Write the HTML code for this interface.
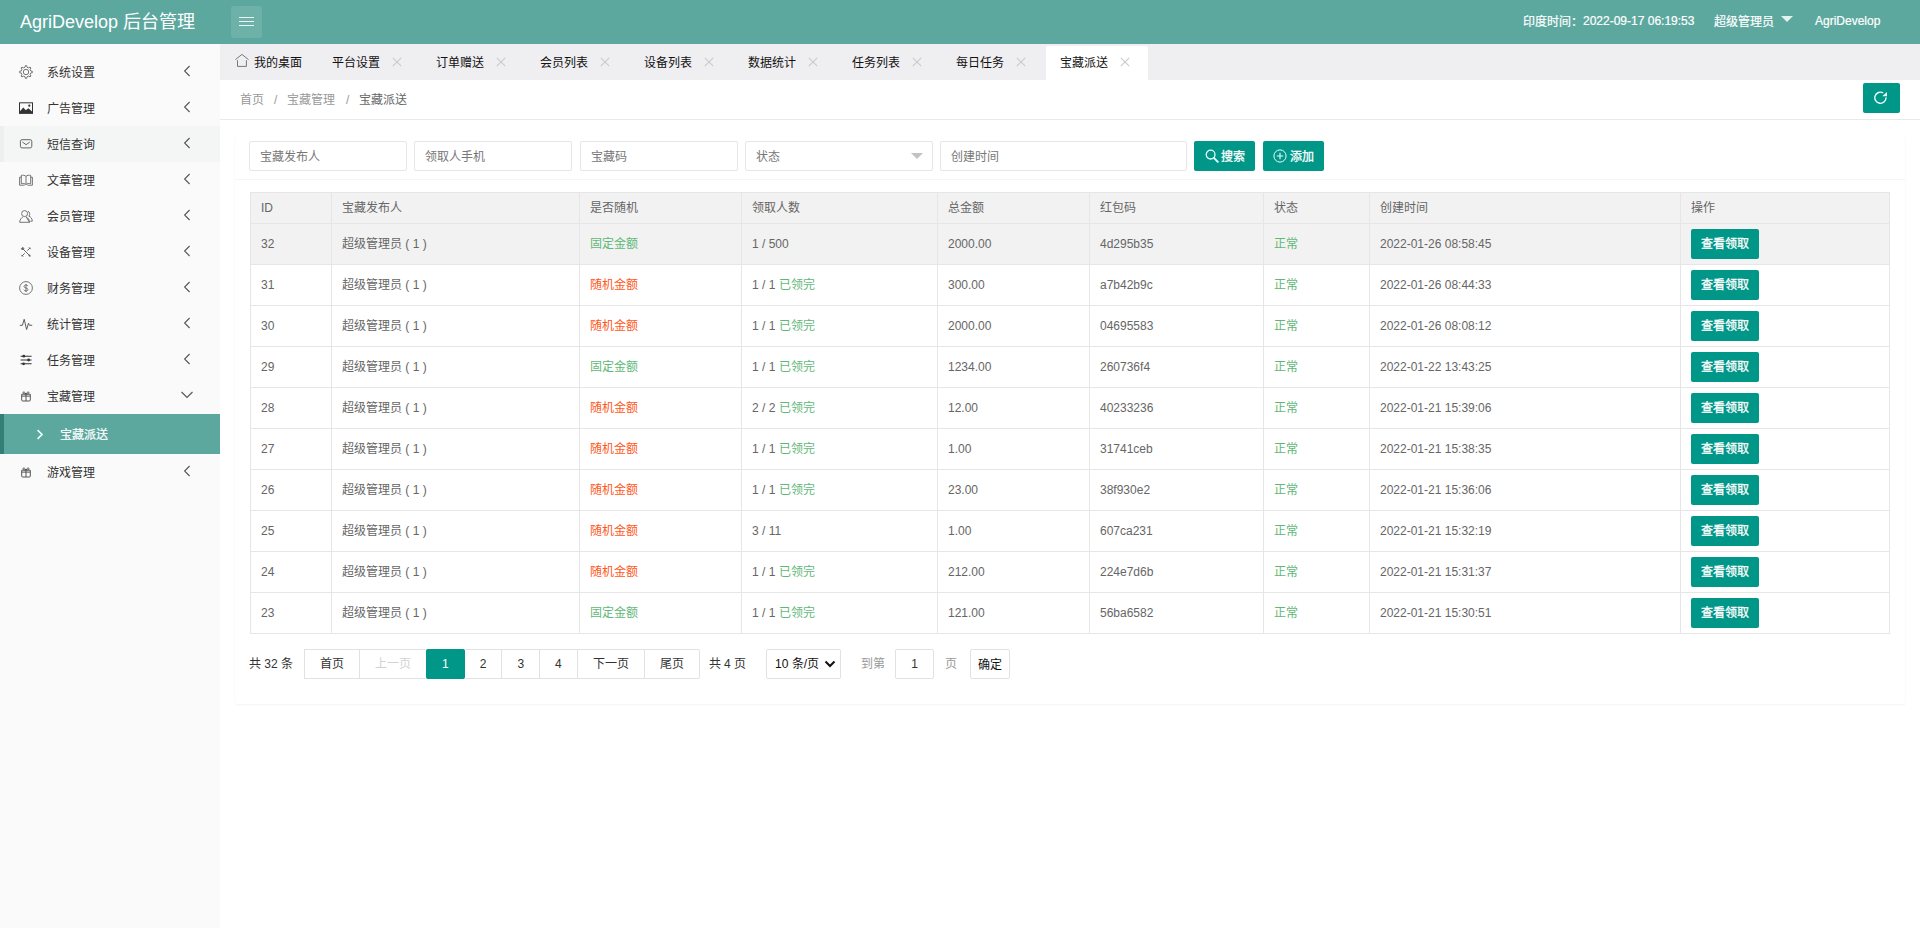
<!DOCTYPE html>
<html lang="zh-CN">
<head>
<meta charset="utf-8">
<title>AgriDevelop 后台管理</title>
<style>
*{box-sizing:border-box;margin:0;padding:0}
html,body{width:1920px;height:928px;overflow:hidden;background:#fff}
body{font-family:"Liberation Sans",sans-serif;font-size:12px;color:#666;line-height:1}
ul{list-style:none}
svg{display:block}
/* header */
.hd{position:absolute;left:0;top:0;width:1920px;height:44px;background:#5ca89f;color:#fff}
.logo{position:absolute;left:20px;top:0;height:44px;line-height:45px;font-size:18px;white-space:nowrap}
.burger{position:absolute;left:231px;top:6px;width:31px;height:32px;border-radius:3px;background:rgba(255,255,255,.11)}
.burger i{position:absolute;left:8px;width:15px;height:1.4px;background:#eaf8f6}
.hr{position:absolute;top:0;height:44px;line-height:42px;font-size:12px;white-space:nowrap;-webkit-text-stroke:.2px #fff}
.tri{position:absolute;left:1781px;top:16px;width:0;height:0;border:6px solid transparent;border-top-color:#e3f1ef;border-bottom-width:0}
/* side */
.side{position:absolute;left:0;top:44px;width:220px;height:884px;background:#fafafa;padding-top:10px}
.side li{position:relative;height:36px;line-height:39px;color:#333;white-space:nowrap}
.side li span{position:absolute;left:47px;top:0}
.side li svg.ic{position:absolute;left:19px;top:11px;width:14px;height:14px}
.side li svg.ar{position:absolute;left:183px;top:11px;width:8px;height:12px}
.side li.hov{background:#f4f6f6;border-left:4px solid #ebefef}
.side li.hov span{left:43px}.side li.hov svg.ic{left:15px}.side li.hov svg.ar{left:179px}
.side li.sub{height:40px;line-height:43px;background:#5ca89f;border-left:4px solid #337f78;color:#fff}
.side li.sub span{left:56px;-webkit-text-stroke:.2px #fff}
.side li.sub svg.ar{left:32px;top:15px;width:8px;height:11px}
/* tabs */
.tabs{position:absolute;left:220px;top:44px;width:1700px;height:36px;background:#efeef1;white-space:nowrap;font-size:0}
.tabs li{display:inline-block;vertical-align:top;position:relative;width:104px;height:36px;line-height:38px;padding:0 0 0 15px;font-size:12px;color:#111;overflow:hidden;white-space:nowrap}
.tabs li.first{width:97px}
.tabs li svg.home{display:inline-block;vertical-align:top;margin:9px 5px 0 0;width:14px;height:14px}
.tabs li i{position:absolute;left:71px;top:0;width:18px;height:36px}
.tabs li i svg{position:absolute;left:4px;top:13px;width:10px;height:10px}
.tabs li.on{background:#fff;width:102px;height:34px;margin:2px 1px 0;padding:0 0 0 14px;line-height:34px;border-radius:2px 2px 0 0}
.tabs li.on i{left:70px;height:34px}.tabs li.on i svg{top:11px}
/* crumb */
.crumb{position:absolute;left:220px;top:80px;width:1700px;height:40px;border-bottom:1px solid #e9e9e9;background:#fff;line-height:40px;padding-left:20px;color:#999;white-space:nowrap}
.crumb span{position:absolute;top:0}
.crumb em{font-style:normal;color:#666}
.refresh{position:absolute;left:1863px;top:83px;width:37px;height:30px;background:#009688;border-radius:2px}
.refresh svg{position:absolute;left:11px;top:8px;width:15px;height:15px}
/* card */
.card{position:absolute;left:235px;top:135px;width:1670px;height:569px;background:#fff;box-shadow:0 1px 2px rgba(0,0,0,.05)}
.filter{position:absolute;left:0;top:0;width:1670px;height:45px;border-bottom:1px solid #f6f6f6}
.inp{position:absolute;top:6px;height:30px;border:1px solid #e6e6e6;border-radius:2px;background:#fff;line-height:30px;padding-left:10px;color:#777;white-space:nowrap}
.btn{position:absolute;top:6px;height:30px;line-height:33px;background:#009688;color:#fff;-webkit-text-stroke:.3px #fff;border-radius:2px;white-space:nowrap}
.btn svg{position:absolute}
/* table */
table{position:absolute;left:15px;top:57px;width:1639px;border-collapse:collapse;table-layout:fixed}
th,td{border:1px solid #e6e6e6;padding:0 10px;text-align:left;font-weight:normal;font-size:12px;color:#666;white-space:nowrap;overflow:hidden}
th{height:31px;background:#f2f2f2;line-height:30px}
td{height:41px;line-height:40px}
tr.hv td{background:#f2f2f2}
.g{color:#5fb878}.r{color:#ff5722}
.op{display:inline-block;vertical-align:middle;width:68px;height:30px;line-height:31px;margin-top:-1px;background:#009688;color:#fff;border-radius:2px;text-align:center;-webkit-text-stroke:.3px #fff}
/* pager */
.pg{position:absolute;left:13px;top:514px;height:30px;white-space:nowrap;font-size:0}
.pg>*{display:inline-block;vertical-align:top;height:30px;line-height:28px;font-size:12px;color:#333}
.pg a{border:1px solid #e2e2e2;padding:0;margin-right:-1px;background:#fff;text-align:center;overflow:hidden}
.pg a.w2{width:56px}.pg a.w3{width:68px}.pg a.w1{width:38.69px}
.pg a.dis{color:#d2d2d2}
.pg a.cur{background:#009688;border-color:#009688;color:#fff;border-radius:2px;position:relative}
.pg .cnt{width:56px;padding-left:1px;border:0;overflow:hidden;line-height:30px}

.inp .caret{position:absolute;left:165px;top:11px;width:0;height:0;border:6px solid transparent;border-top-color:#c2c2c2;border-bottom-width:0}
.pg .tot{margin-left:9px;width:39.3px;padding-left:1px;overflow:hidden;line-height:30px}
.pg .sel{position:relative;margin-left:19px;width:75px;border:1px solid #e2e2e2;border-radius:2px;padding-left:8px;color:#111}
.pg .sel svg{position:absolute;left:57px;top:10px;width:12px;height:8px}
.pg .go{margin-left:19px;width:26px;padding-left:1px;color:#999;overflow:hidden;line-height:30px}
.pg .num{margin-left:9px;width:39px;border:1px solid #e2e2e2;border-radius:2px;text-align:center;color:#333}
.pg .go2{margin-left:10px;width:14px;padding-left:1px;color:#999;overflow:hidden;line-height:30px}
.pg .ok{margin-left:12px;width:40px;line-height:30px;border:1px solid #e2e2e2;border-radius:2px;text-align:center;color:#111}
</style>
</head>
<body>
<div class="hd">
  <div class="logo">AgriDevelop 后台管理</div>
  <div class="burger"><i style="top:11px"></i><i style="top:15px"></i><i style="top:19px"></i></div>
  <div class="hr" style="left:1523px"><span style="position:relative;top:1px">印度时间：</span>2022-09-17 06:19:53</div>
  <div class="hr" style="left:1714px;line-height:44px">超级管理员</div>
  <div class="tri"></div>
  <div class="hr" style="left:1815px">AgriDevelop</div>
</div>

<ul class="side">
  <li><svg class="ic" viewBox="0 0 14 14"><path d="M11.81 6.04 L13.37 6.35 L13.37 7.65 L11.81 7.96 L11.07 9.72 L11.96 11.04 L11.04 11.96 L9.72 11.07 L7.96 11.81 L7.65 13.37 L6.35 13.37 L6.04 11.81 L4.28 11.07 L2.96 11.96 L2.04 11.04 L2.93 9.72 L2.19 7.96 L0.63 7.65 L0.63 6.35 L2.19 6.04 L2.93 4.28 L2.04 2.96 L2.96 2.04 L4.28 2.93 L6.04 2.19 L6.35 0.63 L7.65 0.63 L7.96 2.19 L9.72 2.93 L11.04 2.04 L11.96 2.96 L11.07 4.28Z" fill="none" stroke="#666" stroke-width="0.9" stroke-linejoin="round"/><circle cx="7" cy="7" r="2.7" fill="none" stroke="#666" stroke-width="0.9"/></svg><span>系统设置</span><svg class="ar" viewBox="0 0 8 12"><path d="M6.6 1 1.6 6l5 5" fill="none" stroke="#555" stroke-width="1.1"/></svg></li>
  <li><svg class="ic" viewBox="0 0 14 14"><rect x="0.5" y="1.8" width="13" height="10.6" fill="none" stroke="#333" stroke-width="1"/><path d="M1 12V10.2L4.3 6.6 6.8 9.3 9.4 7.2 13 10.6V12Z" fill="#333"/><circle cx="10.3" cy="4.7" r="1.1" fill="#333"/></svg><span>广告管理</span><svg class="ar" viewBox="0 0 8 12"><path d="M6.6 1 1.6 6l5 5" fill="none" stroke="#555" stroke-width="1.1"/></svg></li>
  <li class="hov"><svg class="ic" viewBox="0 0 14 14"><rect x="1.4" y="2.7" width="11.4" height="8.2" rx="1.6" fill="none" stroke="#666" stroke-width="1"/><path d="M3.4 5 7.1 7.7l3.7-2.7" fill="none" stroke="#666" stroke-width="1"/></svg><span>短信查询</span><svg class="ar" viewBox="0 0 8 12"><path d="M6.6 1 1.6 6l5 5" fill="none" stroke="#555" stroke-width="1.1"/></svg></li>
  <li><svg class="ic" viewBox="0 0 14 14"><path d="M7 3.4C5.8 2.2 4 2 2.3 2.4V10.6C4 10.2 5.8 10.4 7 11.6 8.2 10.4 10 10.2 11.7 10.6V2.4C10 2 8.2 2.2 7 3.4ZM7 3.4V11.6M2.3 4.2H.6V12.2H5.6M11.7 4.2H13.4V12.2H8.4" fill="none" stroke="#666" stroke-width="0.9"/></svg><span>文章管理</span><svg class="ar" viewBox="0 0 8 12"><path d="M6.6 1 1.6 6l5 5" fill="none" stroke="#555" stroke-width="1.1"/></svg></li>
  <li><svg class="ic" viewBox="0 0 14 14"><circle cx="5.6" cy="4.6" r="3" fill="none" stroke="#666" stroke-width="0.9"/><path d="M.7 13.3C.7 10.4 2.6 8.6 3.9 8.1M7.3 8.1C8.6 8.6 10.5 10.4 10.5 13.3ZM.7 13.3H10.5" fill="none" stroke="#666" stroke-width="0.9"/><path d="M9 2.3C10.6 2.6 11.4 5.6 9.9 7.2 11.6 7.8 13.3 9.6 13.3 12.2H11.3" fill="none" stroke="#666" stroke-width="0.9"/></svg><span>会员管理</span><svg class="ar" viewBox="0 0 8 12"><path d="M6.6 1 1.6 6l5 5" fill="none" stroke="#555" stroke-width="1.1"/></svg></li>
  <li><svg class="ic" viewBox="0 0 14 14"><path d="M3.4 3.4 11 11M11.2 2.8 8.3 5.7M5.7 8.3 2.8 11.2" fill="none" stroke="#666" stroke-width="1"/><path d="M2.2 3.8 3.8 2.2 5 3.4 3.4 5ZM9.8 9.2 11.6 11 11 11.6 9.2 9.8Z" fill="#666" stroke="#666" stroke-width=".7"/><path d="M9.9 2.3 11.7 4.1M2.3 9.9 4.1 11.7" fill="none" stroke="#666" stroke-width="1"/></svg><span>设备管理</span><svg class="ar" viewBox="0 0 8 12"><path d="M6.6 1 1.6 6l5 5" fill="none" stroke="#555" stroke-width="1.1"/></svg></li>
  <li><svg class="ic" viewBox="0 0 14 14"><circle cx="7" cy="7" r="6.4" fill="none" stroke="#666" stroke-width="0.9"/><path d="M9 5.2C8.6 4.3 7.8 4 7 4 5.9 4 5 4.6 5 5.5 5 7.4 9 6.6 9 8.5 9 9.4 8.1 10 7 10 6 10 5.2 9.6 4.9 8.7M7 3V11" fill="none" stroke="#666" stroke-width="0.9"/></svg><span>财务管理</span><svg class="ar" viewBox="0 0 8 12"><path d="M6.6 1 1.6 6l5 5" fill="none" stroke="#555" stroke-width="1.1"/></svg></li>
  <li><svg class="ic" viewBox="0 0 14 14"><path d="M.8 8.3H3.4L5.2 2.3 7.6 12.6 9.5 6.2 10.5 8.3H13.2" fill="none" stroke="#555" stroke-width=".95" stroke-linejoin="round"/></svg><span>统计管理</span><svg class="ar" viewBox="0 0 8 12"><path d="M6.6 1 1.6 6l5 5" fill="none" stroke="#555" stroke-width="1.1"/></svg></li>
  <li><svg class="ic" viewBox="0 0 14 14"><path d="M1.6 3.2H12.6M1.6 7H12.6M1.6 10.8H12.6" fill="none" stroke="#333" stroke-width="1.1"/><circle cx="4.8" cy="3.2" r="1.4" fill="#333"/><circle cx="9.6" cy="7" r="1.4" fill="#333"/><circle cx="4.6" cy="10.8" r="1.4" fill="#333"/></svg><span>任务管理</span><svg class="ar" viewBox="0 0 8 12"><path d="M6.6 1 1.6 6l5 5" fill="none" stroke="#555" stroke-width="1.1"/></svg></li>
  <li><svg class="ic" viewBox="0 0 14 14"><path d="M2.7 5.2H11.3V11.1Q11.3 12 10.4 12H3.6Q2.7 12 2.7 11.1ZM2.7 7.1H11.3M7 5.2V12M7 5C5.6 2.2 3.2 2.6 4.4 4.4 5 5 6.2 5 7 5 7.8 5 9 5 9.6 4.4 10.8 2.6 8.4 2.2 7 5Z" fill="none" stroke="#555" stroke-width="1"/></svg><span>宝藏管理</span><svg class="ar" style="left:180px;top:13px;width:14px;height:8px" viewBox="0 0 14 8"><path d="M1.5 1 7 6.5 12.5 1" fill="none" stroke="#555" stroke-width="1.1"/></svg></li>
  <li class="sub"><svg class="ar" viewBox="0 0 8 11"><path d="M1.6 1.2 6 5.5 1.6 9.8" fill="none" stroke="#e8fffb" stroke-width="1.7"/></svg><span>宝藏派送</span></li>
  <li><svg class="ic" viewBox="0 0 14 14"><path d="M2.7 5.2H11.3V11.1Q11.3 12 10.4 12H3.6Q2.7 12 2.7 11.1ZM2.7 7.1H11.3M7 5.2V12M7 5C5.6 2.2 3.2 2.6 4.4 4.4 5 5 6.2 5 7 5 7.8 5 9 5 9.6 4.4 10.8 2.6 8.4 2.2 7 5Z" fill="none" stroke="#555" stroke-width="1"/></svg><span>游戏管理</span><svg class="ar" viewBox="0 0 8 12"><path d="M6.6 1 1.6 6l5 5" fill="none" stroke="#555" stroke-width="1.1"/></svg></li>
</ul>

<ul class="tabs">
  <li class="first"><svg class="home" viewBox="0 0 14 14"><path d="M.4 6.6 6.95 1.4 13.5 6.6M2.5 7.2V13.4H11.4V7.2" fill="none" stroke="#777" stroke-width="1"/></svg>我的桌面</li>
  <li>平台设置<i><svg viewBox="0 0 10 10"><path d="M.8.8 9.2 9.2M9.2.8.8 9.2" fill="none" stroke="#cacaca" stroke-width="1.1"/></svg></i></li>
  <li>订单赠送<i><svg viewBox="0 0 10 10"><path d="M.8.8 9.2 9.2M9.2.8.8 9.2" fill="none" stroke="#cacaca" stroke-width="1.1"/></svg></i></li>
  <li>会员列表<i><svg viewBox="0 0 10 10"><path d="M.8.8 9.2 9.2M9.2.8.8 9.2" fill="none" stroke="#cacaca" stroke-width="1.1"/></svg></i></li>
  <li>设备列表<i><svg viewBox="0 0 10 10"><path d="M.8.8 9.2 9.2M9.2.8.8 9.2" fill="none" stroke="#cacaca" stroke-width="1.1"/></svg></i></li>
  <li>数据统计<i><svg viewBox="0 0 10 10"><path d="M.8.8 9.2 9.2M9.2.8.8 9.2" fill="none" stroke="#cacaca" stroke-width="1.1"/></svg></i></li>
  <li>任务列表<i><svg viewBox="0 0 10 10"><path d="M.8.8 9.2 9.2M9.2.8.8 9.2" fill="none" stroke="#cacaca" stroke-width="1.1"/></svg></i></li>
  <li>每日任务<i><svg viewBox="0 0 10 10"><path d="M.8.8 9.2 9.2M9.2.8.8 9.2" fill="none" stroke="#cacaca" stroke-width="1.1"/></svg></i></li>
  <li class="on">宝藏派送<i><svg viewBox="0 0 10 10"><path d="M.8.8 9.2 9.2M9.2.8.8 9.2" fill="none" stroke="#cacaca" stroke-width="1.1"/></svg></i></li>
</ul>
<div class="crumb"><span style="left:20px">首页</span><span style="left:54px">/</span><span style="left:67px">宝藏管理</span><span style="left:126px">/</span><span style="left:139px"><em>宝藏派送</em></span></div>
<div class="refresh"><svg viewBox="0 0 15 15"><path d="M12 6.4A5.6 5.6 0 1 1 9.2 1.9" fill="none" stroke="#e6fffb" stroke-width="1.4"/><path d="M13 .9V5.3H8.2Z" fill="#e6fffb"/></svg></div>
<div class="card">
  <div class="filter">
    <div class="inp" style="left:14px;width:158px">宝藏发布人</div>
    <div class="inp" style="left:179px;width:158px">领取人手机</div>
    <div class="inp" style="left:345px;width:158px">宝藏码</div>
    <div class="inp" style="left:510px;width:188px">状态<s class="caret"></s></div>
    <div class="inp" style="left:705px;width:247px">创建时间</div>
    <div class="btn" style="left:959px;width:61px"><svg style="left:11px;top:8px;width:14px;height:14px" viewBox="0 0 14 14"><circle cx="5.6" cy="5.6" r="4.4" fill="none" stroke="#e6fffb" stroke-width="1.3"/><path d="M8.9 8.9 12.8 12.8" stroke="#e6fffb" stroke-width="1.9" stroke-linecap="round"/></svg><span style="position:absolute;left:27px">搜索</span></div>
    <div class="btn" style="left:1028px;width:61px"><svg style="left:10px;top:8px;width:14px;height:14px" viewBox="0 0 14 14"><circle cx="7" cy="7" r="6.1" fill="none" stroke="#e6fffb" stroke-width="1"/><path d="M7 3.8V10.2M3.8 7H10.2" stroke="#e6fffb" stroke-width="1.1"/></svg><span style="position:absolute;left:27px">添加</span></div>
  </div>
  <table>
    <colgroup><col style="width:81px"><col style="width:248px"><col style="width:162px"><col style="width:196px"><col style="width:152px"><col style="width:174px"><col style="width:106px"><col style="width:311px"><col style="width:209px"></colgroup>
    <thead><tr><th>ID</th><th>宝藏发布人</th><th>是否随机</th><th>领取人数</th><th>总金额</th><th>红包码</th><th>状态</th><th>创建时间</th><th>操作</th></tr></thead>
    <tbody>
      <tr class="hv"><td>32</td><td>超级管理员 ( 1 )</td><td class="g">固定金额</td><td>1 / 500</td><td>2000.00</td><td>4d295b35</td><td class="g">正常</td><td>2022-01-26 08:58:45</td><td><a class="op">查看领取</a></td></tr>
      <tr><td>31</td><td>超级管理员 ( 1 )</td><td class="r">随机金额</td><td>1 / 1 <span class="g">已领完</span></td><td>300.00</td><td>a7b42b9c</td><td class="g">正常</td><td>2022-01-26 08:44:33</td><td><a class="op">查看领取</a></td></tr>
      <tr><td>30</td><td>超级管理员 ( 1 )</td><td class="r">随机金额</td><td>1 / 1 <span class="g">已领完</span></td><td>2000.00</td><td>04695583</td><td class="g">正常</td><td>2022-01-26 08:08:12</td><td><a class="op">查看领取</a></td></tr>
      <tr><td>29</td><td>超级管理员 ( 1 )</td><td class="g">固定金额</td><td>1 / 1 <span class="g">已领完</span></td><td>1234.00</td><td>260736f4</td><td class="g">正常</td><td>2022-01-22 13:43:25</td><td><a class="op">查看领取</a></td></tr>
      <tr><td>28</td><td>超级管理员 ( 1 )</td><td class="r">随机金额</td><td>2 / 2 <span class="g">已领完</span></td><td>12.00</td><td>40233236</td><td class="g">正常</td><td>2022-01-21 15:39:06</td><td><a class="op">查看领取</a></td></tr>
      <tr><td>27</td><td>超级管理员 ( 1 )</td><td class="r">随机金额</td><td>1 / 1 <span class="g">已领完</span></td><td>1.00</td><td>31741ceb</td><td class="g">正常</td><td>2022-01-21 15:38:35</td><td><a class="op">查看领取</a></td></tr>
      <tr><td>26</td><td>超级管理员 ( 1 )</td><td class="r">随机金额</td><td>1 / 1 <span class="g">已领完</span></td><td>23.00</td><td>38f930e2</td><td class="g">正常</td><td>2022-01-21 15:36:06</td><td><a class="op">查看领取</a></td></tr>
      <tr><td>25</td><td>超级管理员 ( 1 )</td><td class="r">随机金额</td><td>3 / 11</td><td>1.00</td><td>607ca231</td><td class="g">正常</td><td>2022-01-21 15:32:19</td><td><a class="op">查看领取</a></td></tr>
      <tr><td>24</td><td>超级管理员 ( 1 )</td><td class="r">随机金额</td><td>1 / 1 <span class="g">已领完</span></td><td>212.00</td><td>224e7d6b</td><td class="g">正常</td><td>2022-01-21 15:31:37</td><td><a class="op">查看领取</a></td></tr>
      <tr><td>23</td><td>超级管理员 ( 1 )</td><td class="g">固定金额</td><td>1 / 1 <span class="g">已领完</span></td><td>121.00</td><td>56ba6582</td><td class="g">正常</td><td>2022-01-21 15:30:51</td><td><a class="op">查看领取</a></td></tr>
    </tbody>
  </table>
  <div class="pg"><span class="cnt">共 32 条</span><a class="w2">首页</a><a class="w3 dis">上一页</a><a class="w1 cur">1</a><a class="w1">2</a><a class="w1">3</a><a class="w1">4</a><a class="w3">下一页</a><a class="w2" style="border-radius:0 2px 2px 0">尾页</a><span class="tot">共 4 页</span><span class="sel">10 条/页<svg viewBox="0 0 12 8"><path d="M1.5 1.5 6 6 10.5 1.5" fill="none" stroke="#111" stroke-width="2"/></svg></span><span class="go">到第</span><span class="num">1</span><span class="go2">页</span><span class="ok">确定</span></div>
</div>
</body>
</html>
